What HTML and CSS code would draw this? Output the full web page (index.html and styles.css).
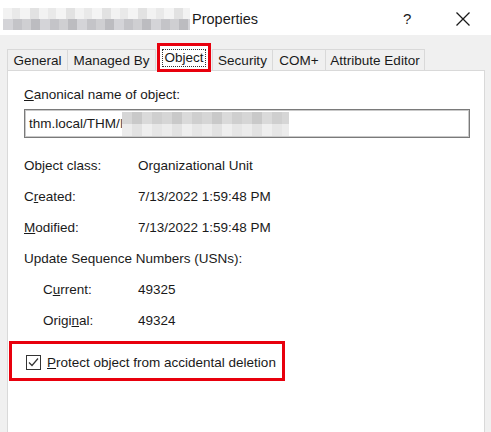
FILE: index.html
```html
<!DOCTYPE html>
<html>
<head>
<meta charset="utf-8">
<link rel="stylesheet" href="styles.css">
</head>
<body>
<div class="window">
  <div class="titlebar">
    <div class="blur-title">
      <div class="blur-row top"></div>
      <div class="blur-row bottom"></div>
    </div>
    <span class="title">Properties</span>
    <span class="help">?</span>
    <svg class="close" width="16" height="16" viewBox="0 0 16 16"><path d="M1.5 1.5 L14.5 14.5 M14.5 1.5 L1.5 14.5" stroke="#1a1a1a" stroke-width="1.3" fill="none"/></svg>
  </div>
  <div class="tabs">
    <div class="tab t-general">General</div>
    <div class="tab t-managed">Managed By</div>
    <div class="tab active"><span class="focus">Object</span></div>
    <div class="tab t-security">Security</div>
    <div class="tab t-com">COM+</div>
    <div class="tab t-attr">Attribute Editor</div>
  </div>
  <div class="panel">
    <div class="label"><u>C</u>anonical name of object:</div>
    <div class="textbox">
      <span>thm.local/THM/</span><span class="cursor-char">I</span>
      <div class="blur-text">
        <div class="blur-row top2"></div>
        <div class="blur-row bottom2"></div>
      </div>
    </div>
    <div class="props">
      <div class="key">Object class:</div><div class="val">Organizational Unit</div>
      <div class="key">C<u>r</u>eated:</div><div class="val">7/13/2022 1:59:48 PM</div>
      <div class="key"><u>M</u>odified:</div><div class="val">7/13/2022 1:59:48 PM</div>
      <div class="usn">Update Sequence Numbers (USNs):</div>
      <div class="key sub">C<u>u</u>rrent:</div><div class="val">49325</div>
      <div class="key sub">Origi<u>n</u>al:</div><div class="val">49324</div>
    </div>
    <div class="protect">
      <span class="checkbox">
        <svg width="13" height="13" viewBox="0 0 13 13"><path d="M2 6.5 L5 9.5 L11 2.5" stroke="#333" stroke-width="1.2" fill="none"/></svg>
      </span>
      <span class="protect-text"><u>P</u>rotect object from accidental deletion</span>
    </div>
  </div>
</div>
</body>
</html>
```
FILE: styles.css
```css
html, body {
  margin: 0;
  padding: 0;
  width: 491px;
  height: 432px;
  overflow: hidden;
  background: #f0f0f0;
  font-family: "Liberation Sans", Arial, sans-serif;
  color: #1a1a1a;
}

.window {
  display: flex;
  flex-direction: column;
  height: 432px;
}

.titlebar {
  height: 35px;
  background: #ffffff;
  display: flex;
  align-items: center;
  flex: none;
}

.blur-title {
  margin-left: 3px;
  width: 187px;
  height: 22px;
  display: flex;
  flex-direction: column;
  margin-top: 2px;
}

.blur-row {
  flex: 1;
}

.blur-row.top {
  background: repeating-linear-gradient(90deg, #f2f2f2 0 9px, #e9e9e9 9px 17px, #f4f4f4 17px 27px, #e2e2e2 27px 36px);
}

.blur-row.bottom {
  background: repeating-linear-gradient(90deg, #d4d4d8 0 10px, #c4c4c8 10px 19px, #cfcfd2 19px 28px, #bcbcc0 28px 37px);
}

.title {
  margin-left: 2px;
  font-size: 14.5px;
  margin-top: 2px;
}

.help {
  margin-left: 145px;
  font-size: 15px;
  margin-top: 2px;
}

.close {
  margin-left: 44px;
  margin-top: 2px;
}

.tabs {
  display: flex;
  align-items: flex-end;
  padding-left: 7px;
  margin-top: 9px;
  height: 26px;
  flex: none;
  position: relative;
  z-index: 1;
}

.tab {
  height: 21px;
  box-sizing: border-box;
  border: 1px solid #d9d9d9;
  border-bottom: none;
  background: #f0f0f0;
  font-size: 13.5px;
  display: flex;
  align-items: center;
  justify-content: center;
  padding-top: 1px;
}

.tab + .tab {
  border-left: none;
}

.t-general { width: 61px; }
.t-managed { width: 88px; }
.t-security { width: 61px; border-left: 1px solid #d9d9d9 !important; }
.t-com { width: 53px; }
.t-attr { width: 99px; }

.tab.active {
  height: 27px;
  width: 52px;
  background: #ffffff;
  margin: 0 2px 0 2px;
  outline: 3px solid #e8000d;
  outline-offset: -2px;
  border: none;
  margin-bottom: -1px;
  padding-top: 0;
  align-items: center;
}

.focus {
  border: 1px dotted #333;
  padding: 0 1px;
  line-height: 16px;
}

.panel {
  flex: 1;
  margin: 0 6px 0 7px;
  background: #ffffff;
  border: 1px solid #d9d9d9;
  border-bottom: none;
  padding: 14px 0 0 16px;
  font-size: 13.5px;
}

.label {
  height: 20px;
  line-height: 20px;
}

.textbox {
  margin-top: 4px;
  width: 446px;
  height: 29px;
  box-sizing: border-box;
  border: 1px solid #7a7a7a;
  box-shadow: inset 0 0 0 1px #c9c9c9;
  display: flex;
  align-items: center;
  padding-left: 4px;
  font-size: 13.5px;
}

.cursor-char {
  color: #555;
}

.blur-text {
  width: 167px;
  height: 24px;
  display: flex;
  flex-direction: column;
  margin-left: -2px;
}

.blur-row.top2 {
  background: repeating-linear-gradient(90deg, #d6d6d6 0 10px, #c9c9c9 10px 20px, #dadada 20px 30px, #cfcfcf 30px 40px);
}

.blur-row.bottom2 {
  background: repeating-linear-gradient(90deg, #ececec 0 10px, #e2e2e2 10px 20px, #efefef 20px 30px, #e6e6e6 30px 40px);
}

.props {
  display: grid;
  grid-template-columns: 114px 1fr;
  grid-auto-rows: 31px;
  align-items: center;
  margin-top: 12px;
}

.usn {
  grid-column: 1 / 3;
}

.key.sub {
  padding-left: 19px;
}

.protect {
  margin: 5px 0 0 -15px;
  width: 276px;
  height: 40px;
  box-sizing: border-box;
  border: 3px solid #e8000d;
  display: flex;
  align-items: center;
  padding-left: 14px;
  padding-top: 2px;
}

.checkbox {
  width: 15px;
  height: 15px;
  box-sizing: border-box;
  border: 1px solid #333;
  display: flex;
  align-items: center;
  justify-content: center;
  background: #fff;
}

.protect-text {
  margin-left: 6px;
}
```
